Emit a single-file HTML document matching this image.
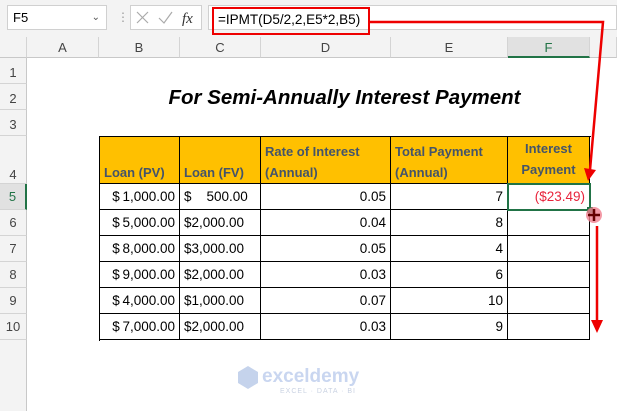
<!DOCTYPE html>
<html><head><style>
*{margin:0;padding:0;box-sizing:border-box}
body{width:617px;height:411px;overflow:hidden;background:#fff;font-family:"Liberation Sans",sans-serif;position:relative}
.a{position:absolute}
.ch{position:absolute;top:37px;height:21px;background:#f3f3f3;border-right:1px solid #d4d4d4;border-bottom:1px solid #c8c8c8;font-size:13px;color:#444;text-align:center;line-height:21px}
.rh{position:absolute;left:0;width:27px;background:#f3f3f3;border-bottom:1px solid #d4d4d4;border-right:1px solid #c8c8c8;font-size:13px;color:#444;text-align:center}
.c{position:absolute;border-right:1px solid #000;border-bottom:1px solid #000;font-size:13.5px;color:#000;white-space:nowrap;padding:0 4px;display:flex;align-items:center;height:26px}
.r{justify-content:flex-end}
.h{background:#FFC000;color:#44546A;font-weight:bold;font-size:13px;align-items:flex-end;line-height:21px;padding-bottom:0;height:47px;top:137px}
</style></head><body>
<div class="a" style="left:0;top:0;width:617px;height:37px;background:#f3f3f3"></div>
<div class="a" style="left:7px;top:5px;width:100px;height:25px;background:#fff;border:1px solid #d0d0d0;font-size:13px;line-height:23px;padding-left:5px">F5<span style="position:absolute;right:6px;top:0;font-size:10px;color:#555">&#8964;</span></div>
<div class="a" style="left:117px;top:10px;color:#999;font-size:12px">&#8942;</div>
<div class="a" style="left:130px;top:5px;width:72px;height:25px;background:#fff;border:1px solid #d0d0d0"></div>
<svg class="a" style="left:135px;top:10px" width="65" height="16"><path d="M2 2L13 13M13 2L2 13" stroke="#aaa" stroke-width="1.2"/><path d="M24 8L29 13L37 2" stroke="#aaa" stroke-width="1.2" fill="none"/><text x="47" y="13" font-family="Liberation Serif" font-style="italic" font-size="15" fill="#333">fx</text></svg>
<div class="a" style="left:208px;top:5px;width:409px;height:25px;background:#fff;border:1px solid #d0d0d0"></div>
<div class="a" style="left:212px;top:7px;width:158px;height:28px;border:2.5px solid #e00;font-size:13.5px;line-height:22px;padding-left:4px">=IPMT(D5/2,2,E5*2,B5)</div>
<div class="ch" style="left:0;width:27px"></div>
<div class="ch" style="left:27px;width:72px">A</div>
<div class="ch" style="left:99px;width:81px">B</div>
<div class="ch" style="left:180px;width:81px">C</div>
<div class="ch" style="left:261px;width:130px">D</div>
<div class="ch" style="left:391px;width:117px">E</div>
<div class="ch" style="left:508px;width:82px;color:#217346;background:#e1e1e1;border-bottom:2px solid #217346">F</div>
<div class="ch" style="left:590px;width:27px"></div>
<div class="rh" style="top:58px;height:26px;line-height:30px">1</div>
<div class="rh" style="top:84px;height:26px;line-height:30px">2</div>
<div class="rh" style="top:110px;height:26px;line-height:30px">3</div>
<div class="rh" style="top:136px;height:48px;line-height:78px">4</div>
<div class="rh" style="top:184px;height:26px;line-height:26px;color:#217346;background:#e1e1e1;border-right:2px solid #217346">5</div>
<div class="rh" style="top:210px;height:26px;line-height:26px">6</div>
<div class="rh" style="top:236px;height:26px;line-height:26px">7</div>
<div class="rh" style="top:262px;height:26px;line-height:26px">8</div>
<div class="rh" style="top:288px;height:26px;line-height:26px">9</div>
<div class="rh" style="top:314px;height:26px;line-height:26px">10</div>
<div class="rh" style="top:340px;height:71px;border-bottom:none"></div>
<div class="a" style="left:99px;top:84px;width:491px;text-align:center;font-weight:bold;font-style:italic;font-size:20.5px;line-height:28px">For Semi-Annually Interest Payment</div>
<div class="a" style="left:99px;top:136px;width:492px;height:205px;border-left:1px solid #000;border-top:1px solid #000"></div>
<div class="c h" style="left:100px;width:80px">Loan (PV)</div>
<div class="c h" style="left:180px;width:81px">Loan (FV)</div>
<div class="c h" style="left:261px;width:130px">Rate of Interest<br>(Annual)</div>
<div class="c h" style="left:391px;width:117px">Total Payment<br>(Annual)</div>
<div class="c h" style="left:508px;width:82px;justify-content:center;text-align:center;padding-bottom:3px">Interest<br>Payment</div>

<div class="c r" style="left:100px;top:184px;width:80px">$&thinsp;1,000.00</div>
<div class="c" style="left:180px;top:184px;width:81px">$&nbsp;&nbsp;&nbsp;&nbsp;500.00</div>
<div class="c r" style="left:261px;top:184px;width:130px">0.05</div>
<div class="c r" style="left:391px;top:184px;width:117px">7</div>
<div class="c r" style="left:508px;top:184px;width:82px;color:#e8243c">($23.49)</div>

<div class="c r" style="left:100px;top:210px;width:80px">$&thinsp;5,000.00</div>
<div class="c" style="left:180px;top:210px;width:81px">$2,000.00</div>
<div class="c r" style="left:261px;top:210px;width:130px">0.04</div>
<div class="c r" style="left:391px;top:210px;width:117px">8</div>
<div class="c" style="left:508px;top:210px;width:82px"></div>

<div class="c r" style="left:100px;top:236px;width:80px">$&thinsp;8,000.00</div>
<div class="c" style="left:180px;top:236px;width:81px">$3,000.00</div>
<div class="c r" style="left:261px;top:236px;width:130px">0.05</div>
<div class="c r" style="left:391px;top:236px;width:117px">4</div>
<div class="c" style="left:508px;top:236px;width:82px"></div>

<div class="c r" style="left:100px;top:262px;width:80px">$&thinsp;9,000.00</div>
<div class="c" style="left:180px;top:262px;width:81px">$2,000.00</div>
<div class="c r" style="left:261px;top:262px;width:130px">0.03</div>
<div class="c r" style="left:391px;top:262px;width:117px">6</div>
<div class="c" style="left:508px;top:262px;width:82px"></div>

<div class="c r" style="left:100px;top:288px;width:80px">$&thinsp;4,000.00</div>
<div class="c" style="left:180px;top:288px;width:81px">$1,000.00</div>
<div class="c r" style="left:261px;top:288px;width:130px">0.07</div>
<div class="c r" style="left:391px;top:288px;width:117px">10</div>
<div class="c" style="left:508px;top:288px;width:82px"></div>

<div class="c r" style="left:100px;top:314px;width:80px">$&thinsp;7,000.00</div>
<div class="c" style="left:180px;top:314px;width:81px">$2,000.00</div>
<div class="c r" style="left:261px;top:314px;width:130px">0.03</div>
<div class="c r" style="left:391px;top:314px;width:117px">9</div>
<div class="c" style="left:508px;top:314px;width:82px"></div>

<div class="a" style="left:507px;top:183px;width:84px;height:28px;border:2px solid #217346"></div>
<div class="a" style="left:587px;top:207px;width:6px;height:6px;background:#217346"></div>
<svg class="a" style="left:0;top:0" width="617" height="411">
<polyline points="370,22 603,22 590,170" fill="none" stroke="#e00" stroke-width="2.5"/>
<polygon points="584,168 596,170 588,181" fill="#e00"/>
<circle cx="594" cy="215" r="8" fill="#f08090" opacity="0.8"/>
<path d="M594 209V221M588 215H600" stroke="#600" stroke-width="2.5"/>
<line x1="597" y1="226" x2="597" y2="322" stroke="#e00" stroke-width="2.5"/>
<polygon points="591,320 603,320 597,333" fill="#e00"/>
<path d="M238 372L248 366L258 372L258 383L248 389L238 383Z" fill="#c5d3ec"/>
<text x="262" y="382" font-family="Liberation Sans" font-size="19" font-weight="bold" fill="#c9d6f0">exceldemy</text>
<text x="280" y="393" font-family="Liberation Sans" font-size="7" fill="#c9d2e2" letter-spacing="1">EXCEL · DATA · BI</text>
</svg>
</body></html>
